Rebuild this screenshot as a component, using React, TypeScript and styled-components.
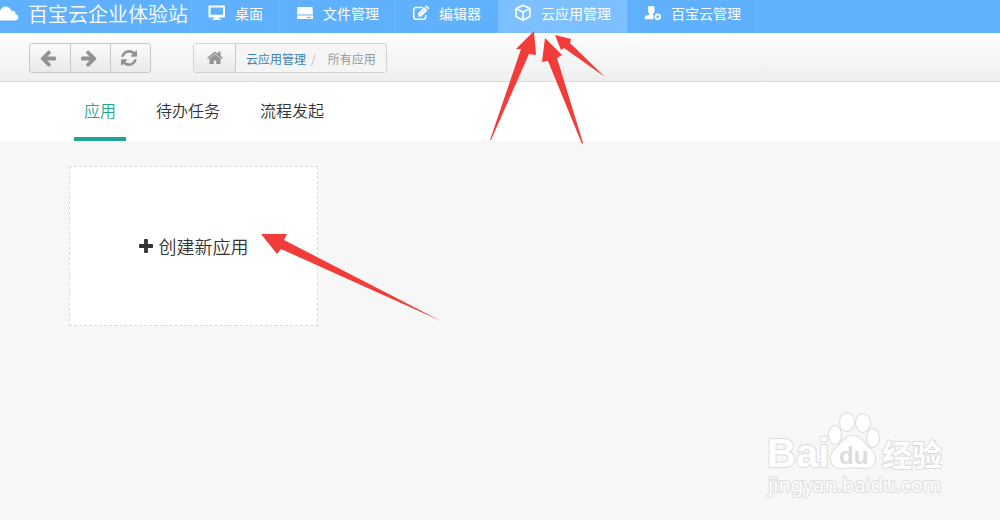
import React from "react";
import styled, { createGlobalStyle, css } from "styled-components";

const GlobalStyle = createGlobalStyle`
  *, *::before, *::after { box-sizing: border-box; }
  body {
    margin: 0;
    background: #f7f7f7;
    color: #333;
    font-family: "Noto Sans CJK SC", "Liberation Sans", sans-serif;
    font-size: 14px;
  }
  a { color: inherit; text-decoration: none; }
  ul, ol { list-style: none; margin: 0; padding: 0; }
`;

const Page = styled.div`
  position: relative;
  min-height: 100vh;
  overflow: hidden;
`;

const Header = styled.header`
  display: flex;
  align-items: center;
  height: 33px;
  background: #5fb0fd;
  color: #fff;
  white-space: nowrap;
`;

const Brand = styled.a`
  display: flex;
  align-items: center;
  gap: 9px;
  height: 33px;
  padding: 0 3px 6px 0;
  font-size: 20px;
  font-weight: 350;
  line-height: 27px;
`;

const Nav = styled.nav`
  display: flex;
`;

const NavLink = styled.a<{ $active?: boolean }>`
  display: flex;
  align-items: center;
  gap: 9px;
  height: 33px;
  padding: 0 16px 8px;
  border-left: 1px solid #6bb6fd;
  line-height: 22px;
  ${(p) => p.$active && css`background: #7cc0ff;`}
  &:last-child { border-right: 1px solid #6bb6fd; }
`;

const Toolbar = styled.div`
  display: flex;
  gap: 42px;
  padding: 10px 29px 8px;
  border-bottom: 1px solid #dcdcdc;
  background: linear-gradient(#fefefe, #efefef);
`;

const ButtonGroup = styled.div`
  display: flex;
  border: 1px solid #c8c8c8;
  border-radius: 3px;
  background: linear-gradient(#fbfbfb, #e9e9e9);
`;

const ToolButton = styled.button`
  display: flex;
  align-items: center;
  justify-content: center;
  width: 40px;
  height: 28px;
  padding: 0 4px 0 0;
  border: 0;
  background: none;
  color: #929292;
  & + & { border-left: 1px solid #c8c8c8; }
`;

const Breadcrumb = styled.nav`
  display: flex;
  align-items: center;
  border: 1px solid #d3d3d3;
  border-radius: 3px;
  background: #f5f5f5;
  font-size: 12px;
  line-height: 28px;
`;

const HomeLink = styled.a`
  display: flex;
  align-items: center;
  justify-content: center;
  width: 42px;
  height: 28px;
  border-right: 1px solid #c8c8c8;
  background: linear-gradient(#fbfbfb, #e9e9e9);
  color: #929292;
`;

const Crumbs = styled.ol`
  display: flex;
  padding: 2px 10px 0;
`;

const Crumb = styled.li`
  color: #999;
  line-height: 26px;
  & a { color: #3b7fb5; }
  & + &::before {
    content: "/";
    padding: 0 12px 0 5px;
    color: #c4b4bc;
  }
`;

const Tabs = styled.nav`
  display: flex;
  gap: 20px;
  padding: 0 74px;
  background: #fff;
`;

const Tab = styled.a<{ $active?: boolean }>`
  height: 59px;
  padding: 0 10px;
  border-bottom: 4px solid ${(p) => (p.$active ? "#1fa595" : "transparent")};
  color: ${(p) => (p.$active ? "#1fa595" : "#333")};
  font-size: 16px;
  font-weight: 350;
  line-height: 56px;
`;

const Content = styled.main`
  display: flex;
  padding: 25px 69px;
`;

const CreateCard = styled.button`
  display: flex;
  align-items: center;
  justify-content: center;
  gap: 6px;
  width: 249px;
  height: 160px;
  padding: 0;
  border: 1px dashed #dadada;
  background: #fff;
  color: #333;
  font: inherit;
  font-size: 18px;
  font-weight: 350;
`;

const Arrows = styled.svg`
  position: absolute;
  top: 0;
  left: 0;
  pointer-events: none;
`;

const Watermark = styled.svg`
  position: absolute;
  right: 50px;
  bottom: 15px;
  pointer-events: none;
`;

type IconProps = { d: string; box: string; width: number; height: number; flip?: boolean };

const Icon = ({ d, box, width, height, flip }: IconProps) => (
  <svg viewBox={box} width={width} height={height} fill="currentColor" aria-hidden="true">
    <path d={d} transform={flip ? "translate(1536 0) scale(-1 1)" : undefined} />
  </svg>
);

const ARROW =
  "M1536 896v128q0 53-32.5 90.5t-84.5 37.5h-704l293 294q38 36 38 90t-38 90l-75 76q-37 37-90 37-52 0-91-37l-651-652q-37-37-37-90 0-52 37-91l651-650q38-38 91-38 52 0 90 38l75 74q38 38 38 91t-38 91l-293 293h704q52 0 84.5 37.5t32.5 90.5z";
const REFRESH =
  "M1511 928q0 5-1 7-64 268-268 434.5t-478 166.5q-146 0-282.5-55t-243.5-157l-129 129q-19 19-45 19t-45-19-19-45v-448q0-26 19-45t45-19h448q26 0 45 19t19 45-19 45l-137 137q71 66 161 102t187 36q134 0 250-65t186-179q11-17 53-117 8-23 30-23h192q13 0 22.5 9.5t9.5 22.5zm25-800v448q0 26-19 45t-45 19h-448q-26 0-45-19t-19-45 19-45l138-138q-148-137-349-137-134 0-250 65t-186 179q-11 17-53 117-8 23-30 23h-199q-13 0-22.5-9.5t-9.5-22.5v-7q65-268 270-434.5t480-166.5q146 0 284 55.5t245 156.5l130-129q19-19 45-19t45 19 19 45z";
const HOME =
  "M1408 992v480q0 26-19 45t-45 19h-384v-384h-256v384h-384q-26 0-45-19t-19-45v-480q0-1 .5-3t.5-3l575-474 575 474q1 2 1 6zm223-69l-62 74q-8 9-21 11h-3q-13 0-21-7l-692-577-692 577q-12 8-24 7-13-2-21-11l-62-74q-8-10-7-23.5t11-21.5l719-599q32-26 76-26t76 26l244 204v-195q0-14 9-23t23-9h192q14 0 23 9t9 23v408l219 182q10 8 11 21.5t-7 23.5z";
const PLUS =
  "M1408 736v192q0 40-28 68t-68 28h-416v416q0 40-28 68t-68 28h-192q-40 0-68-28t-28-68v-416h-416q-40 0-68-28t-28-68v-192q0-40 28-68t68-28h416v-416q0-40 28-68t68-28h192q40 0 68 28t28 68v416h416q40 0 68 28t28 68z";

const CloudIcon = () => (
  <svg width="19" height="16" viewBox="0 0 19 16" fill="currentColor" aria-hidden="true">
    <path d="M0 14.500V5C1 2 3 .5 5.500.5 8.500.5 10.500 2.500 11.500 5c2.500-.6 4 .8 4 3 1.800.5 2.800 1.700 2.800 3.200 0 2-1.500 3.300-3.500 3.300z" />
  </svg>
);

const DesktopIcon = () => (
  <svg width="18" height="16" viewBox="0 0 18 16" fill="currentColor" aria-hidden="true">
    <path fillRule="evenodd" d="M1.500.5h14.500a1 1 0 0 1 1 1V11.500a1 1 0 0 1-1 1h-5v1.300h2V15H4.500v-1.200h2v-1.300h-5a1 1 0 0 1-1-1V1.500a1 1 0 0 1 1-1zM2.500 2.500v7.300h12.500v-7.300z" />
  </svg>
);

const DriveIcon = () => (
  <svg width="18" height="16" viewBox="0 0 18 16" aria-hidden="true">
    <path fill="currentColor" d="M1.500 2h15L17 9.500H1zM1 10.500h16V14H1z" />
    <path stroke="#5fb0fd" d="M11 12.500h4" />
  </svg>
);

const EditIcon = () => (
  <svg width="18" height="16" viewBox="0 0 18 16" aria-hidden="true">
    <path d="M11 2.500H4a2.200 2.200 0 0 0-2.200 2.200V12A2.200 2.200 0 0 0 4 14.200h7.500a2.200 2.200 0 0 0 2.200-2.200v-2" fill="none" stroke="currentColor" strokeWidth="1.500" />
    <path d="M6 8.200 12.300 2l3.200 3.200-6.300 6.300H6zM13 1.300l.7-.7q.6-.4 1.200 0l2 2q.4.6 0 1.200l-.7.7z" fill="currentColor" />
    <path d="m8 8.800 4.700-4.700" stroke="#5fb0fd" strokeWidth=".6" />
  </svg>
);

const CubeIcon = () => (
  <svg width="18" height="18" viewBox="0 0 18 18" fill="none" stroke="currentColor" strokeWidth="1.600" strokeLinejoin="round" aria-hidden="true">
    <path d="M9 1.200 16 4.500v8L9 16.300 2 12.500v-8zM2 4.500l7 3.600 7-3.600M9 8.100v8" />
  </svg>
);

const UserIcon = () => (
  <svg width="18" height="16" viewBox="0 0 18 16" aria-hidden="true">
    <path fill="currentColor" d="M4 2.500Q4 1 5.500 1H9q1.500 0 1.500 1.500V6Q10.500 8 9 9v1.200l1 .5A4 4 0 0 0 9.600 14.300H.8V12q0-1 1-1.300L5.500 9.500V9Q4 8 4 6z" />
    <circle cx="13.700" cy="11.700" r="2.300" fill="none" stroke="currentColor" strokeWidth="1.900" />
  </svg>
);

const navItems = [
  { label: "桌面", icon: <DesktopIcon /> },
  { label: "文件管理", icon: <DriveIcon /> },
  { label: "编辑器", icon: <EditIcon /> },
  { label: "云应用管理", icon: <CubeIcon />, active: true },
  { label: "百宝云管理", icon: <UserIcon /> },
];

const tabs = ["应用", "待办任务", "流程发起"];

export default function App() {
  return (
    <Page>
      <GlobalStyle />
      <Header>
        <Brand href="#">
          <CloudIcon />
          百宝云企业体验站
        </Brand>
        <Nav>
          {navItems.map((item) => (
            <NavLink key={item.label} href="#" $active={item.active}>
              {item.icon}
              {item.label}
            </NavLink>
          ))}
        </Nav>
      </Header>
      <Toolbar>
        <ButtonGroup>
          <ToolButton aria-label="后退">
            <Icon d={ARROW} box="0 150 1536 1600" width={16} height={17} />
          </ToolButton>
          <ToolButton aria-label="前进">
            <Icon d={ARROW} box="0 150 1536 1600" width={16} height={17} flip />
          </ToolButton>
          <ToolButton aria-label="刷新">
            <Icon d={REFRESH} box="0 0 1536 1536" width={16} height={16} />
          </ToolButton>
        </ButtonGroup>
        <Breadcrumb>
          <HomeLink href="#" aria-label="首页">
            <Icon d={HOME} box="0 200 1664 1400" width={16} height={14} />
          </HomeLink>
          <Crumbs>
            <Crumb><a href="#">云应用管理</a></Crumb>
            <Crumb>所有应用</Crumb>
          </Crumbs>
        </Breadcrumb>
      </Toolbar>
      <Tabs>
        {tabs.map((label, i) => (
          <Tab key={label} href="#" $active={i === 0}>{label}</Tab>
        ))}
      </Tabs>
      <Content>
        <CreateCard>
          <Icon d={PLUS} box="0 128 1408 1408" width={14} height={14} />
          创建新应用
        </CreateCard>
      </Content>

      <Arrows width="620" height="330" viewBox="0 0 620 330" fill="#f23c3a" aria-hidden="true">
        <path d="M534 31 516 49 521 49 490 140 491 140 529 54 536 55z" />
        <path d="M545 38 542 62 548 61 582 144 583 143 557 58 562 55z" />
        <path d="M555 35 571 39 570 43 605 77 564 48 561 50z" />
        <path d="M261 234 287 234 284 240 441 321 281 249 277 254z" />
      </Arrows>

      <Watermark width="190" height="95" viewBox="0 0 190 95" fill="#fff" stroke="#dcdcdc" strokeWidth="2" paintOrder="stroke" strokeLinejoin="round" aria-hidden="true">
        <text x="7" y="57" fontSize="40" fontWeight="700" fontFamily='"Liberation Sans", sans-serif'>Bai</text>
        <path d="M93 26c8 0 10 6 15 11 5 4 8 8 7 13-1 6-6 9-12 8-7-1-13-1-20 0-6 1-11-2-12-8-1-5 2-9 6-13 6-5 8-11 16-11z" />
        <ellipse cx="75" cy="25" rx="6" ry="9" />
        <ellipse cx="87" cy="12" rx="7" ry="9" />
        <ellipse cx="103" cy="13" rx="7" ry="9" />
        <ellipse cx="113" cy="28" rx="6" ry="9" />
        <text x="79" y="54" fontSize="24" fontWeight="700" fontFamily='"Liberation Sans", sans-serif' fill="#dcdcdc" stroke="none">du</text>
        <text x="122" y="56" fontSize="30" fontWeight="700" fontFamily='"Noto Sans CJK SC", sans-serif'>经验</text>
        <text x="8" y="82" fontSize="20" fontFamily='"Noto Sans", sans-serif'>jingyan.baidu.com</text>
      </Watermark>
    </Page>
  );
}
